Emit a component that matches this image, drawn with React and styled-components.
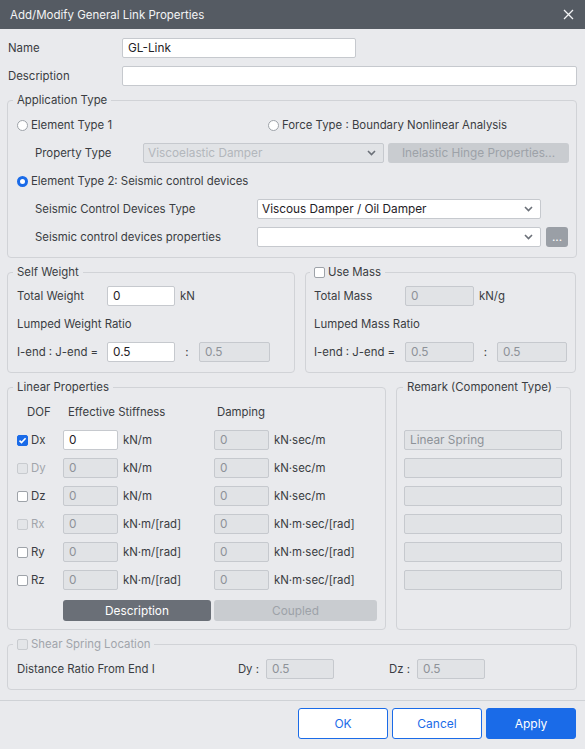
import React from 'react'
import styled, { createGlobalStyle } from 'styled-components'

const GlobalStyle = createGlobalStyle`
    html, body {
        margin: 0;
        padding: 0;
        background: #e9eaed;
    }
    body {
        font-family: Inter, 'Noto Sans', 'Liberation Sans', sans-serif;
        font-size: 11.4px;
        color: #3a3d42;
    }
    * {
        box-sizing: border-box;
    }
`

const Window = styled.div`
    width: 585px;
    height: 749px;
    display: flex;
    flex-direction: column;
    background: #e9eaed;
    overflow: hidden;
`

const TitleBar = styled.div`
    height: 29px;
    flex: none;
    display: flex;
    align-items: center;
    justify-content: space-between;
    padding: 0 11px 0 10px;
    background: #555b63;
    color: #f3f4f5;
    font-size: 11.5px;
`

const Content = styled.div`
    display: flex;
    flex-direction: column;
    padding: 9px 8px 0 7px;
`

const Row = styled.div`
    display: grid;
    grid-template-columns: ${(p) => p.$cols};
    align-items: center;
    height: 20px;
    padding-left: ${(p) => p.$indent || 0}px;
    margin-top: ${(p) => p.$mt || 0}px;
`

const Label = styled.span`
    padding-left: ${(p) => p.$pl || 0}px;
    color: ${(p) => (p.$disabled ? '#a1a5ab' : '#3a3d42')};
    text-align: ${(p) => p.$align || 'left'};
    padding-right: ${(p) => p.$pr || 0}px;
    white-space: nowrap;
`

const TextInput = styled.input`
    width: 100%;
    height: 20px;
    padding: 0 5px;
    border: 1px solid #c6c9ce;
    border-radius: 2px;
    background: #fff;
    color: #1f2226;
    font: inherit;
    font-size: 11.8px;
    outline: none;
    &:disabled {
        background: #e1e3e6;
        color: #8d9298;
    }
`

const Group = styled.fieldset`
    margin: ${(p) => (p.$mt === undefined ? 7 : p.$mt)}px 0 0;
    padding: ${(p) => p.$pad || '7px 8px 10px 9px'};
    width: ${(p) => (p.$w ? `${p.$w}px` : 'auto')};
    min-width: 0;
    border: 1px solid #d1d3d7;
    border-radius: 4px;
    display: flex;
    flex-direction: column;
    gap: 8px;
`

const Legend = styled.legend`
    display: flex;
    align-items: center;
    gap: 3px;
    margin-left: ${(p) => p.$ml ?? -4}px;
    padding: 0 4px;
    line-height: 15px;
    color: ${(p) => (p.$disabled ? '#a1a5ab' : '#3a3d42')};
`

const SideBySide = styled.div`
    display: flex;
    gap: 10px;
    margin-top: 7px;
    & > fieldset {
        margin-top: 0;
    }
`

const RadioItem = styled.label`
    display: flex;
    align-items: center;
    gap: 3px;
    white-space: nowrap;
`

const RadioDot = styled.span`
    width: 11px;
    height: 11px;
    flex: none;
    border-radius: 50%;
    background: #fff;
    border: ${(p) => (p.$checked ? '3px solid #1a6be8' : '1px solid #9ea3a9')};
`

const CheckBox = styled.span`
    width: 11px;
    height: 11px;
    flex: none;
    display: inline-flex;
    align-items: center;
    justify-content: center;
    border-radius: 2px;
    border: 1px solid
        ${(p) => (p.$checked ? '#1a6be8' : p.$disabled ? '#c8cbcf' : '#9ea3a9')};
    background: ${(p) => (p.$checked ? '#1a6be8' : p.$disabled ? '#e3e5e8' : '#fff')};
`

const CheckItem = styled.span`
    display: flex;
    align-items: center;
    gap: 3px;
    color: ${(p) => (p.$disabled ? '#a1a5ab' : '#3a3d42')};
`

const SelectBox = styled.div`
    height: 20px;
    display: flex;
    align-items: center;
    justify-content: space-between;
    padding: 0 7px 0 4px;
    border: 1px solid #c6c9ce;
    border-radius: 2px;
    background: ${(p) => (p.$disabled ? '#e1e3e6' : '#fff')};
    color: ${(p) => (p.$disabled ? '#b3b7bc' : '#1f2226')};
    font-size: 11.8px;
    white-space: nowrap;
`

const FlatButton = styled.button`
    height: ${(p) => p.$h || 20}px;
    width: ${(p) => (p.$w ? `${p.$w}px` : '100%')};
    justify-self: ${(p) => p.$justify || 'stretch'};
    border: none;
    border-radius: 3px;
    padding: 0;
    font: inherit;
    font-size: 11.8px;
    background: ${(p) =>
        p.$variant === 'dark' ? '#6a6f77' : p.$variant === 'gray' ? '#9a9fa6' : '#c9ccd0'};
    color: ${(p) => (p.$variant === 'disabled' ? '#9da2a8' : '#fff')};
`

const StiffGrid = styled.div`
    display: grid;
    grid-template-columns: 46px 55px 96px 55px auto;
    align-items: center;
    height: 20px;
`

const ButtonRow = styled.div`
    display: flex;
    gap: 3px;
    padding-left: 46px;
    margin-top: 2px;
    height: 21px;
`

const Footer = styled.div`
    margin-top: 10px;
    flex: 1;
    border-top: 1px solid #cfd2d6;
    display: flex;
    justify-content: flex-end;
    align-items: flex-start;
    gap: 4px;
    padding: 7px 9px 0 0;
`

const DialogButton = styled.button`
    width: 90px;
    height: 31px;
    border-radius: 3px;
    border: 1px solid #1a6be8;
    background: ${(p) => (p.$primary ? '#1a6be8' : '#fff')};
    color: ${(p) => (p.$primary ? '#fff' : '#1a6be8')};
    font: inherit;
    font-size: 12px;
`

const Chevron = () => (
    <svg width='9' height='6' viewBox='0 0 9 6'>
        <path d='M1 1l3.5 3.5L8 1' fill='none' stroke='#6b7078' strokeWidth='1.6' />
    </svg>
)

const Check = () => (
    <svg width='9' height='9' viewBox='0 0 9 9'>
        <path d='M1.5 4.6l2 2L7.6 2.2' fill='none' stroke='#fff' strokeWidth='1.6' />
    </svg>
)

const CloseIcon = () => (
    <svg width='11' height='11' viewBox='0 0 11 11'>
        <path d='M1 1l9 9M10 1l-9 9' stroke='#f3f4f5' strokeWidth='1.3' />
    </svg>
)

function Select({ value, disabled }) {
    return (
        <SelectBox $disabled={disabled}>
            <span>{value}</span>
            <Chevron />
        </SelectBox>
    )
}

function Box({ checked, disabled, children }) {
    return (
        <CheckItem $disabled={disabled}>
            <CheckBox $checked={checked} $disabled={disabled}>
                {checked && <Check />}
            </CheckBox>
            {children}
        </CheckItem>
    )
}

const dofs = [
    { id: 'Dx', checked: true, unit: 'kN/m', dUnit: 'kN·sec/m', remark: 'Linear Spring' },
    { id: 'Dy', disabled: true, unit: 'kN/m', dUnit: 'kN·sec/m' },
    { id: 'Dz', unit: 'kN/m', dUnit: 'kN·sec/m' },
    { id: 'Rx', disabled: true, unit: 'kN·m/[rad]', dUnit: 'kN·m·sec/[rad]' },
    { id: 'Ry', unit: 'kN·m/[rad]', dUnit: 'kN·m·sec/[rad]' },
    { id: 'Rz', unit: 'kN·m/[rad]', dUnit: 'kN·m·sec/[rad]' },
]

export default function App() {
    return (
        <>
            <GlobalStyle />
            <Window>
                <TitleBar>
                    <span>Add/Modify General Link Properties</span>
                    <CloseIcon />
                </TitleBar>
                <Content>
                    <Row $cols='115px 234px'>
                        <Label $pl={1}>Name</Label>
                        <TextInput defaultValue='GL-Link' />
                    </Row>
                    <Row $cols='115px 455px' $mt={8}>
                        <Label $pl={1}>Description</Label>
                        <TextInput defaultValue='' />
                    </Row>

                    <Group>
                        <Legend>Application Type</Legend>
                        <Row $cols='251px auto'>
                            <RadioItem>
                                <RadioDot />
                                Element Type 1
                            </RadioItem>
                            <RadioItem>
                                <RadioDot />
                                Force Type : Boundary Nonlinear Analysis
                            </RadioItem>
                        </Row>
                        <Row $cols='108px 241px 185px' $indent={18}>
                            <Label>Property Type</Label>
                            <Select value='Viscoelastic Damper' disabled />
                            <FlatButton $variant='disabled' $w={181} $justify='end'>
                                Inelastic Hinge Properties...
                            </FlatButton>
                        </Row>
                        <Row $cols='auto'>
                            <RadioItem>
                                <RadioDot $checked />
                                Element Type 2: Seismic control devices
                            </RadioItem>
                        </Row>
                        <Row $cols='222px 284px' $indent={18}>
                            <Label>Seismic Control Devices Type</Label>
                            <Select value='Viscous Damper / Oil Damper' />
                        </Row>
                        <Row $cols='222px 284px 27px' $indent={18}>
                            <Label>Seismic control devices properties</Label>
                            <Select value='' />
                            <FlatButton $variant='gray' $w={22} $justify='end'>
                                ...
                            </FlatButton>
                        </Row>
                    </Group>

                    <SideBySide>
                        <Group $w={288} $pad='6px 8px 10px 9px'>
                            <Legend>Self Weight</Legend>
                            <Row $cols='90px 68px auto'>
                                <Label>Total Weight</Label>
                                <TextInput defaultValue='0' />
                                <Label $pl={5}>kN</Label>
                            </Row>
                            <Row $cols='auto'>
                                <Label>Lumped Weight Ratio</Label>
                            </Row>
                            <Row $cols='90px 68px 24px 71px'>
                                <Label>I-end : J-end =</Label>
                                <TextInput defaultValue='0.5' />
                                <Label $align='center'>:</Label>
                                <TextInput defaultValue='0.5' disabled />
                            </Row>
                        </Group>
                        <Group $w={271} $pad='6px 8px 10px 8px'>
                            <Legend>
                                <Box>Use Mass</Box>
                            </Legend>
                            <Row $cols='91px 69px auto'>
                                <Label>Total Mass</Label>
                                <TextInput defaultValue='0' disabled />
                                <Label $pl={5}>kN/g</Label>
                            </Row>
                            <Row $cols='auto'>
                                <Label>Lumped Mass Ratio</Label>
                            </Row>
                            <Row $cols='91px 69px 23px 70px'>
                                <Label>I-end : J-end =</Label>
                                <TextInput defaultValue='0.5' disabled />
                                <Label $align='center'>:</Label>
                                <TextInput defaultValue='0.5' disabled />
                            </Row>
                        </Group>
                    </SideBySide>

                    <SideBySide>
                        <Group $w={379} $pad='7px 8px 8px 9px'>
                            <Legend>Linear Properties</Legend>
                            <StiffGrid>
                                <Label $pl={10}>DOF</Label>
                                <Label $pl={5} style={{ gridColumn: 'span 2' }}>
                                    Effective Stiffness
                                </Label>
                                <Label $pl={3}>Damping</Label>
                            </StiffGrid>
                            {dofs.map((d) => (
                                <StiffGrid key={d.id}>
                                    <Box checked={d.checked} disabled={d.disabled}>
                                        {d.id}
                                    </Box>
                                    <TextInput defaultValue='0' disabled={!d.checked} />
                                    <Label $pl={5}>{d.unit}</Label>
                                    <TextInput defaultValue='0' disabled />
                                    <Label $pl={5}>{d.dUnit}</Label>
                                </StiffGrid>
                            ))}
                            <ButtonRow>
                                <FlatButton $variant='dark' $w={148} $h={21}>
                                    Description
                                </FlatButton>
                                <FlatButton $variant='disabled' $w={163} $h={21}>
                                    Coupled
                                </FlatButton>
                            </ButtonRow>
                        </Group>
                        <Group $w={175} $pad='7px 8px 8px 7px'>
                            <Legend $ml={-1}>Remark (Component Type)</Legend>
                            <Row $cols='auto' />
                            {dofs.map((d) => (
                                <Row key={d.id} $cols='1fr'>
                                    <TextInput defaultValue={d.remark || ''} disabled />
                                </Row>
                            ))}
                        </Group>
                    </SideBySide>

                    <Group>
                        <Legend $disabled>
                            <Box disabled>Shear Spring Location</Box>
                        </Legend>
                        <Row $cols='217px 32px 68px 83px 68px'>
                            <Label>Distance Ratio From End I</Label>
                            <Label $align='right' $pr={7}>
                                Dy :
                            </Label>
                            <TextInput defaultValue='0.5' disabled />
                            <Label $align='right' $pr={7}>
                                Dz :
                            </Label>
                            <TextInput defaultValue='0.5' disabled />
                        </Row>
                    </Group>
                </Content>
                <Footer>
                    <DialogButton>OK</DialogButton>
                    <DialogButton>Cancel</DialogButton>
                    <DialogButton $primary>Apply</DialogButton>
                </Footer>
            </Window>
        </>
    )
}
